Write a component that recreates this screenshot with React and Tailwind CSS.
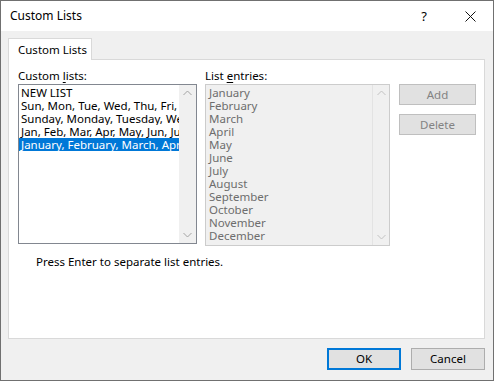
import React from "react";

const font = { fontFamily: '"Noto Sans", "Open Sans", sans-serif' };

function Chevron({ up, color = "#a3a3a3" }) {
  return (
    <svg width="9" height="6" viewBox="0 0 9 6" className="block">
      {up ? (
        <path d="M0.5 5 L4.5 1 L8.5 5" stroke={color} strokeWidth="1" fill="none" />
      ) : (
        <path d="M0.5 1 L4.5 5 L8.5 1" stroke={color} strokeWidth="1" fill="none" />
      )}
    </svg>
  );
}

const lists = [
  "NEW LIST",
  "Sun, Mon, Tue, Wed, Thu, Fri, Sat",
  "Sunday, Monday, Tuesday, Wednesday, Thursday",
  "Jan, Feb, Mar, Apr, May, Jun, Jul, Aug",
  "January, February, March, April, May",
];

const months = [
  "January","February","March","April","May","June","July","August","September","October","November","December",
];

export default function App() {
  return (
    <div
      className="w-[494px] h-[381px] border border-[#707070] bg-[#f0f0f0] flex flex-col text-[11.5px] text-black overflow-hidden"
      style={font}
    >
      {/* Title bar */}
      <div className="h-[30px] bg-white flex items-center shrink-0">
        <div className="pl-[9px] flex-1 text-[12px] leading-none">Custom Lists</div>
        <div className="w-[46px] flex justify-center text-[13px] leading-none">?</div>
        <div className="w-[46px] flex justify-center">
          <svg width="11" height="11" viewBox="0 0 11 11">
            <path d="M0.5 0.5 L10.5 10.5 M10.5 0.5 L0.5 10.5" stroke="#111" strokeWidth="1" />
          </svg>
        </div>
      </div>

      {/* Body */}
      <div className="flex-1 flex flex-col pl-[7px] pr-[8px] pt-[7px]">
        {/* Tab */}
        <div className="flex">
          <div className="h-[22px] w-[84px] bg-white border border-[#d9d9d9] border-b-0 -mb-px relative z-10 flex items-center pl-[9px] leading-none">
            Custom Lists
          </div>
        </div>
        {/* Panel */}
        <div className="h-[280px] bg-white border border-[#d9d9d9] pl-[9px] pt-[8px] flex flex-col">
          <div className="flex">
            {/* Left column */}
            <div className="w-[179px] flex flex-col">
              <div className="h-[16px] leading-[16px]">
                Custom <span className="underline underline-offset-2">l</span>ists:
              </div>
              <div className="h-[160px] border border-[#828790] bg-white flex">
                <div className="flex-1 overflow-hidden pt-[1px]">
                  {lists.map((t, i) => (
                    <div
                      key={i}
                      className={
                        "h-[13px] leading-[13px] whitespace-nowrap pl-[2px] overflow-hidden " +
                        (i === 4 ? "bg-[#0078d7] text-white" : "")
                      }
                    >
                      {t}
                    </div>
                  ))}
                </div>
                <div className="w-[17px] bg-[#f0f0f0] flex flex-col justify-between items-center py-[5px]">
                  <Chevron up />
                  <Chevron />
                </div>
              </div>
            </div>

            {/* Middle column */}
            <div className="w-[185px] ml-[8px] flex flex-col">
              <div className="h-[16px] leading-[16px]">
                List <span className="underline underline-offset-2">e</span>ntries:
              </div>
              <div className="h-[162px] border border-[#cccccc] bg-[#f0f0f0] flex">
                <div className="flex-1 overflow-hidden pt-[1px] text-[#6d6d6d]">
                  {months.map((m) => (
                    <div key={m} className="h-[13px] leading-[13px] pl-[3px] whitespace-nowrap">
                      {m}
                    </div>
                  ))}
                </div>
                <div className="w-[17px] border-l border-[#e3e3e3] flex flex-col justify-between items-center py-[5px]">
                  <Chevron up color="#c2c2c2" />
                  <Chevron color="#c2c2c2" />
                </div>
              </div>
            </div>

            {/* Buttons */}
            <div className="ml-[9px] pt-[16px] flex flex-col gap-[9px]">
              <div className="w-[77px] h-[21px] bg-[#e1e1e1] border border-[#bfbfbf] text-[#838383] flex items-center justify-center leading-none">
                Add
              </div>
              <div className="w-[77px] h-[21px] bg-[#e1e1e1] border border-[#bfbfbf] text-[#838383] flex items-center justify-center leading-none">
                Delete
              </div>
            </div>
          </div>

          <div className="mt-[8px] pl-[18px] leading-[16px]">Press Enter to separate list entries.</div>
        </div>

        {/* Footer */}
        <div className="flex justify-end gap-[10px] pt-[9px]">
          <div className="w-[74px] h-[22px] bg-[#e1e1e1] border-2 border-[#0078d7] flex items-center justify-center leading-none">
            OK
          </div>
          <div className="w-[74px] h-[22px] bg-[#e1e1e1] border border-[#adadad] flex items-center justify-center leading-none">
            Cancel
          </div>
        </div>
      </div>
    </div>
  );
}
